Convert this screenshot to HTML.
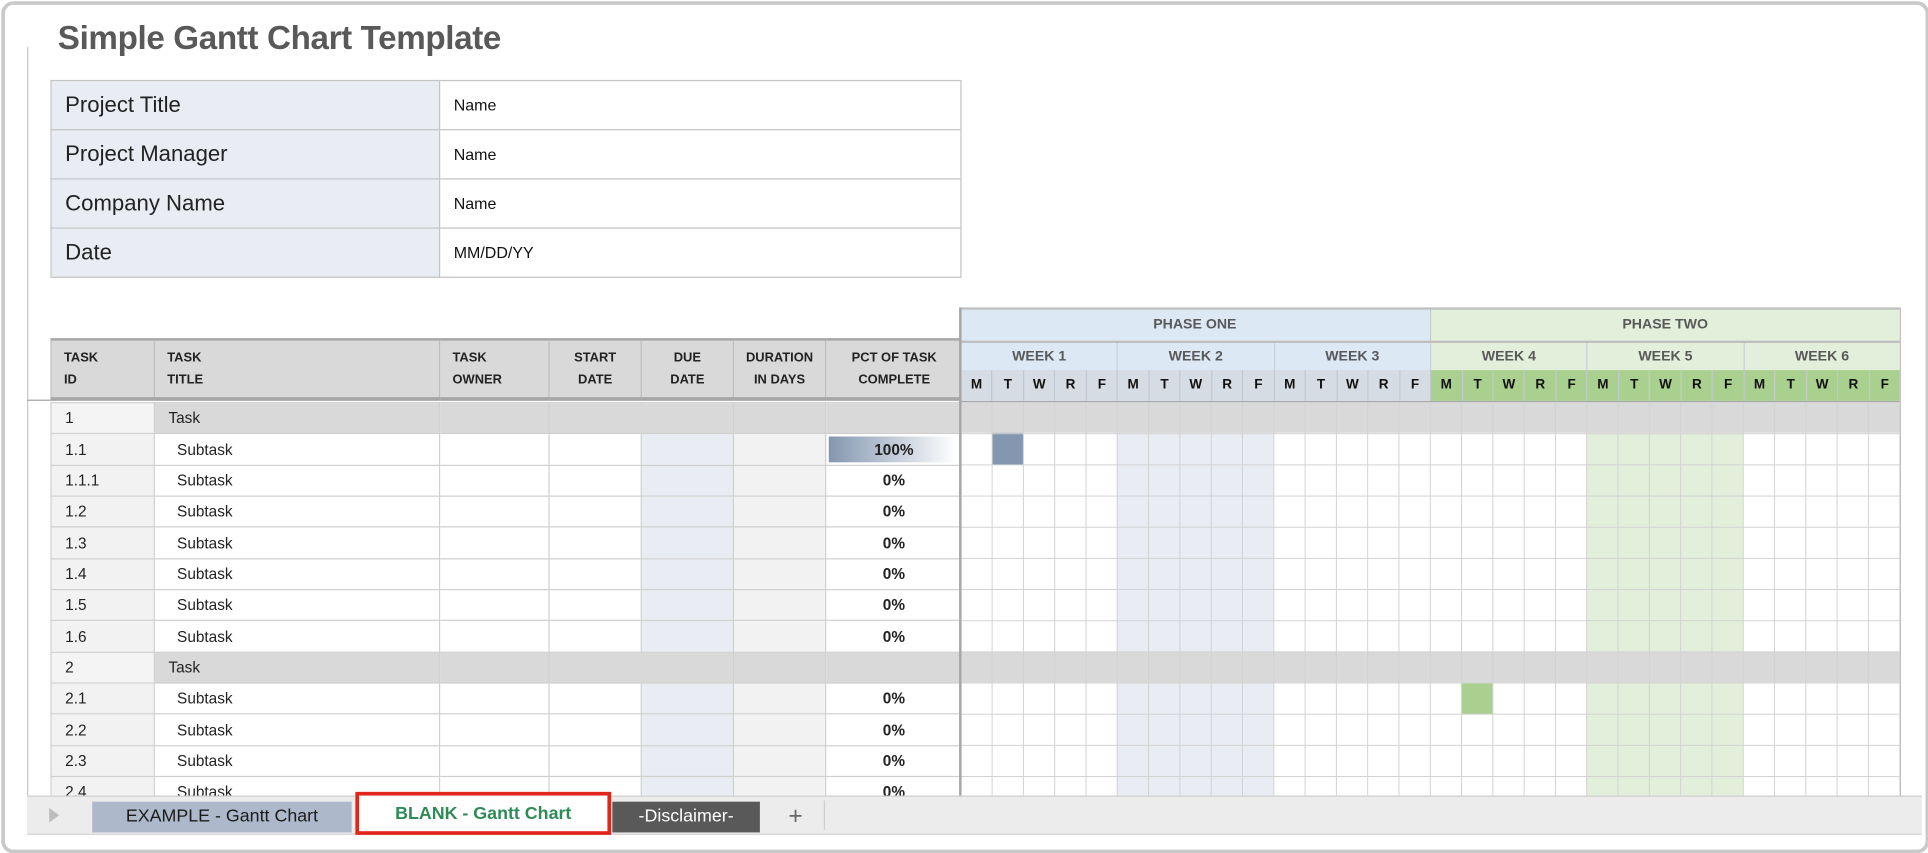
<!DOCTYPE html>
<html><head><meta charset="utf-8"><style>
html,body{margin:0;padding:0;background:#fff;width:1928px;height:852px;overflow:hidden;font-family:"Liberation Sans",sans-serif}
#s{position:absolute;left:0;top:0;width:1568px;height:693px;transform:scale(1.22959);transform-origin:0 0}
.a{position:absolute}
.frame{left:1px;top:1px;width:1562px;height:687px;border:3px solid #c9c9c9;border-radius:10px;background:#fff}
.title{left:47px;top:16px;font-size:27px;font-weight:bold;color:#595959;letter-spacing:-0.3px}
table{border-collapse:collapse;table-layout:fixed}
.info{left:41px;top:65px;width:741px}
.info td{border:1.5px solid #c4c4c4;height:39px;padding:0 0 0 11px}
.info td.l{background:#e9ecf3;font-size:18px;color:#222;width:304px}
.info td.v{font-size:13px;color:#111}
.hd{left:41px;top:275px;width:741px}
.hd td{background:#d9d9d9;border-left:1.5px solid #bdbdbd;border-top:2px solid #a6a6a6;border-bottom:3px solid #a6a6a6;height:46px;font-size:10.5px;font-weight:bold;color:#222;line-height:18px;padding:0 0 0 10px}
.hd td.c{text-align:center;padding:0}
.bd{left:41px;top:327px;width:741px}
.bd td{height:24.35px;border:1px solid #d0d0d0;font-size:12.5px;color:#222;padding:0 0 0 11px;white-space:nowrap;overflow:hidden}
.bd tr.t td{background:#d9d9d9}
.bd td.id{background:#f2f2f2}
.bd tr.t td.id{background:#f4f4f4}
.bd td.du{background:#e9ecf3}
.bd td.dr{background:#f2f2f2}
.bd td.p{text-align:center;font-weight:bold;padding:0;font-size:12.5px}
.bd td.sub{padding-left:18px}
.g{left:781px;width:764px}
.ph{top:250px;height:25px;border-top:2px solid #bfbfbf;font-size:11.5px;font-weight:bold;color:#595959;text-align:center;line-height:24px}
.wk{top:277px;height:24px;display:flex;font-size:11.5px;font-weight:bold;color:#595959;border-top:2px solid #bfbfbf}
.wk div{flex:1;text-align:center;line-height:23px;border-left:1px solid #c8d0dc}
.dy{top:301px;height:25px;display:flex;font-size:11px;font-weight:bold;color:#111;border-bottom:2px solid #a6a6a6}
.dy div{flex:1;text-align:center;line-height:25px;border-left:1px solid #c2c8d0}
.body{top:327px;left:782px;width:763px;height:320px;background:#fff;overflow:hidden}
.lines{position:absolute;left:0;top:0;right:0;bottom:0;background-image:linear-gradient(to right,#d2d2d2 1px,transparent 1px),linear-gradient(to bottom,#d2d2d2 1px,transparent 1px);background-size:25.467px 25.35px}
.tabbar{left:22px;top:647px;width:1541px;height:30px;background:#ececec;border-top:1px solid #cfcfcf;border-bottom:1px solid #d5d5d5}
.tab{position:absolute;top:4px;height:25px;line-height:25px;text-align:center;font-size:14.5px}
</style></head><body><div id="s">
<div class="a frame"></div>
<div class="a" style="left:22px;top:38px;width:1px;height:610px;background:#c8c8c8"></div>
<div class="a" style="left:22px;top:325px;width:20px;height:1px;background:#a6a6a6"></div>
<div class="a title">Simple Gantt Chart Template</div>
<table class="a info">
<tr><td class="l">Project Title</td><td class="v">Name</td></tr>
<tr><td class="l">Project Manager</td><td class="v">Name</td></tr>
<tr><td class="l">Company Name</td><td class="v">Name</td></tr>
<tr><td class="l">Date</td><td class="v">MM/DD/YY</td></tr>
</table>
<table class="a hd"><colgroup><col style="width:84px"><col style="width:232px"><col style="width:89px"><col style="width:75px"><col style="width:75px"><col style="width:75px"><col style="width:111px"></colgroup>
<tr><td>TASK<br>ID</td><td>TASK<br>TITLE</td><td>TASK<br>OWNER</td><td class="c">START<br>DATE</td><td class="c">DUE<br>DATE</td><td class="c">DURATION<br>IN DAYS</td><td class="c">PCT OF TASK<br>COMPLETE</td></tr>
</table>
<table class="a bd"><colgroup><col style="width:84px"><col style="width:232px"><col style="width:89px"><col style="width:75px"><col style="width:75px"><col style="width:75px"><col style="width:111px"></colgroup>
<tr class="t"><td class="id">1</td><td>Task</td><td></td><td></td><td></td><td></td><td></td></tr>
<tr><td class="id">1.1</td><td class="sub">Subtask</td><td></td><td></td><td class="du"></td><td class="dr"></td><td class="p" style="position:relative"><div style="position:absolute;left:2px;right:2px;top:2px;bottom:2px;background:linear-gradient(to right,#8497b0,#fff 98%)"></div><span style="position:relative">100%</span></td></tr>
<tr><td class="id">1.1.1</td><td class="sub">Subtask</td><td></td><td></td><td class="du"></td><td class="dr"></td><td class="p">0%</td></tr>
<tr><td class="id">1.2</td><td class="sub">Subtask</td><td></td><td></td><td class="du"></td><td class="dr"></td><td class="p">0%</td></tr>
<tr><td class="id">1.3</td><td class="sub">Subtask</td><td></td><td></td><td class="du"></td><td class="dr"></td><td class="p">0%</td></tr>
<tr><td class="id">1.4</td><td class="sub">Subtask</td><td></td><td></td><td class="du"></td><td class="dr"></td><td class="p">0%</td></tr>
<tr><td class="id">1.5</td><td class="sub">Subtask</td><td></td><td></td><td class="du"></td><td class="dr"></td><td class="p">0%</td></tr>
<tr><td class="id">1.6</td><td class="sub">Subtask</td><td></td><td></td><td class="du"></td><td class="dr"></td><td class="p">0%</td></tr>
<tr class="t"><td class="id">2</td><td>Task</td><td></td><td></td><td></td><td></td><td></td></tr>
<tr><td class="id">2.1</td><td class="sub">Subtask</td><td></td><td></td><td class="du"></td><td class="dr"></td><td class="p">0%</td></tr>
<tr><td class="id">2.2</td><td class="sub">Subtask</td><td></td><td></td><td class="du"></td><td class="dr"></td><td class="p">0%</td></tr>
<tr><td class="id">2.3</td><td class="sub">Subtask</td><td></td><td></td><td class="du"></td><td class="dr"></td><td class="p">0%</td></tr>
<tr><td class="id">2.4</td><td class="sub">Subtask</td><td></td><td></td><td class="du"></td><td class="dr"></td><td class="p">0%</td></tr>
</table>
<div class="a g ph" style="display:flex;padding:0"><div style="flex:1;background:#dde8f5;border-right:1px solid #c8c8c8">PHASE ONE</div><div style="flex:1;background:#e2efda">PHASE TWO</div></div>
<div class="a g wk"><div style="background:#dde8f5">WEEK 1</div><div style="background:#dde8f5">WEEK 2</div><div style="background:#dde8f5">WEEK 3</div><div style="background:#e2efda">WEEK 4</div><div style="background:#e2efda">WEEK 5</div><div style="background:#e2efda">WEEK 6</div></div>
<div class="a g dy">
<div style="background:#d6dce4">M</div><div style="background:#d6dce4">T</div><div style="background:#d6dce4">W</div><div style="background:#d6dce4">R</div><div style="background:#d6dce4">F</div>
<div style="background:#d6dce4">M</div><div style="background:#d6dce4">T</div><div style="background:#d6dce4">W</div><div style="background:#d6dce4">R</div><div style="background:#d6dce4">F</div>
<div style="background:#d6dce4">M</div><div style="background:#d6dce4">T</div><div style="background:#d6dce4">W</div><div style="background:#d6dce4">R</div><div style="background:#d6dce4">F</div>
<div style="background:#a9d08e">M</div><div style="background:#a9d08e">T</div><div style="background:#a9d08e">W</div><div style="background:#a9d08e">R</div><div style="background:#a9d08e">F</div>
<div style="background:#a9d08e">M</div><div style="background:#a9d08e">T</div><div style="background:#a9d08e">W</div><div style="background:#a9d08e">R</div><div style="background:#a9d08e">F</div>
<div style="background:#a9d08e">M</div><div style="background:#a9d08e">T</div><div style="background:#a9d08e">W</div><div style="background:#a9d08e">R</div><div style="background:#a9d08e">F</div>
</div>
<div class="a body">
<div class="a" style="left:126.3px;top:0;width:127.3px;height:320px;background:#e9ecf3"></div>
<div class="a" style="left:508.3px;top:0;width:127.3px;height:320px;background:#e2efda"></div>
<div class="a" style="left:0;top:0;width:764px;height:25.35px;background:#d9d9d9"></div>
<div class="a" style="left:0;top:202.8px;width:764px;height:25.35px;background:#d9d9d9"></div>
<div class="a" style="left:24.5px;top:25.35px;width:25.5px;height:25.35px;background:#8497b0"></div>
<div class="a" style="left:406.5px;top:228.2px;width:25.5px;height:25.35px;background:#a9d08e"></div>
<div class="lines" style="left:-1px"></div>
</div>
<div class="a" style="left:780px;top:250px;width:2px;height:397px;background:#a6a6a6"></div>
<div class="a" style="left:1545px;top:250px;width:1px;height:397px;background:#bfbfbf"></div>
<div class="a tabbar">
<div class="a" style="left:18px;top:9px;width:0;height:0;border-top:6px solid transparent;border-bottom:6px solid transparent;border-left:8px solid #bdbdbd"></div>
<div class="tab" style="left:53px;width:211px;background:#adb9ca;color:#1a1a1a">EXAMPLE - Gantt Chart</div>
<div class="tab" style="left:267px;top:-4px;width:202px;height:29px;line-height:31px;background:#fff;border:3px solid #e0251b;color:#2e8b57;font-weight:bold">BLANK - Gantt Chart</div>
<div class="tab" style="left:476px;width:120px;background:#595959;color:#fff">-Disclaimer-</div>
<div class="tab" style="left:614px;width:22px;color:#666;font-size:20px">+</div>
<div class="a" style="left:648px;top:3px;width:1px;height:24px;background:#cfcfcf"></div>
</div>
</div></body></html>
